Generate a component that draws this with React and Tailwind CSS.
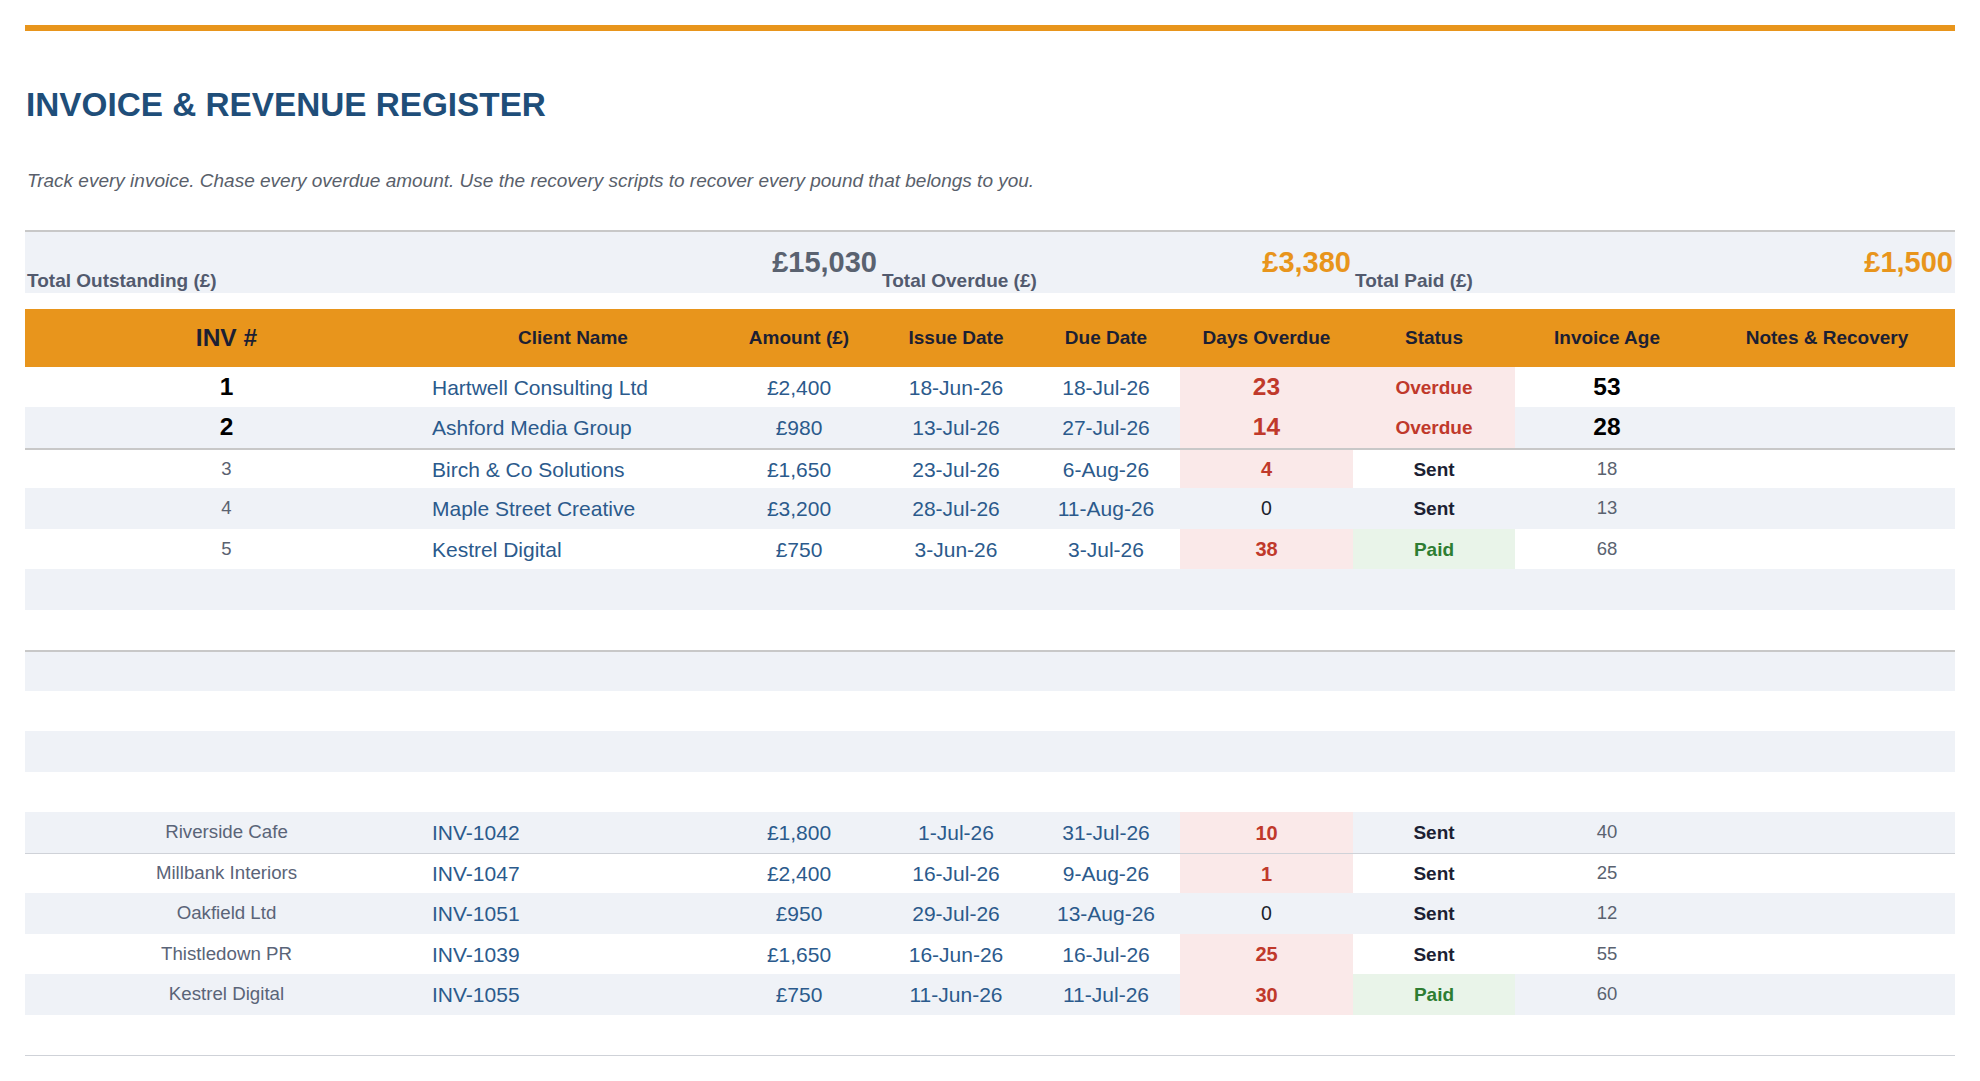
import React from "react";

const cols =
  "grid grid-cols-[403px_290px_162px_152px_148px_173px_162px_184px_256px]";

const rows = [
  { kind: "big", a: "1", b: "Hartwell Consulting Ltd", amt: "£2,400", issue: "18-Jun-26", due: "18-Jul-26", days: 23, status: "Overdue", age: "53" },
  { kind: "big", a: "2", b: "Ashford Media Group", amt: "£980", issue: "13-Jul-26", due: "27-Jul-26", days: 14, status: "Overdue", age: "28" },
  { kind: "small", line: "thick", a: "3", b: "Birch & Co Solutions", amt: "£1,650", issue: "23-Jul-26", due: "6-Aug-26", days: 4, status: "Sent", age: "18" },
  { kind: "small", a: "4", b: "Maple Street Creative", amt: "£3,200", issue: "28-Jul-26", due: "11-Aug-26", days: 0, status: "Sent", age: "13" },
  { kind: "small", a: "5", b: "Kestrel Digital", amt: "£750", issue: "3-Jun-26", due: "3-Jul-26", days: 38, status: "Paid", age: "68" },
  { kind: "empty" },
  { kind: "empty" },
  { kind: "empty", line: "thick" },
  { kind: "empty" },
  { kind: "empty" },
  { kind: "empty" },
  { kind: "alt", a: "Riverside Cafe", b: "INV-1042", amt: "£1,800", issue: "1-Jul-26", due: "31-Jul-26", days: 10, status: "Sent", age: "40" },
  { kind: "alt", line: "thin", a: "Millbank Interiors", b: "INV-1047", amt: "£2,400", issue: "16-Jul-26", due: "9-Aug-26", days: 1, status: "Sent", age: "25" },
  { kind: "alt", a: "Oakfield Ltd", b: "INV-1051", amt: "£950", issue: "29-Jul-26", due: "13-Aug-26", days: 0, status: "Sent", age: "12" },
  { kind: "alt", a: "Thistledown PR", b: "INV-1039", amt: "£1,650", issue: "16-Jun-26", due: "16-Jul-26", days: 25, status: "Sent", age: "55" },
  { kind: "alt", a: "Kestrel Digital", b: "INV-1055", amt: "£750", issue: "11-Jun-26", due: "11-Jul-26", days: 30, status: "Paid", age: "60" },
  { kind: "empty" },
];

function Cell({ className = "", children }) {
  return (
    <div className={"flex items-center justify-center h-full leading-none " + className}>
      {children}
    </div>
  );
}

function Row({ r, i }) {
  const bg = i % 2 === 1 ? "bg-[#eff2f7]" : "bg-white";
  const line =
    r.line === "thick"
      ? "border-t-2 border-[#c8c8c8]"
      : r.line === "thin"
      ? "border-t border-[#cfd2d8]"
      : "";

  if (r.kind === "empty") {
    return <div className={`h-[40.5px] ${bg} ${line}`} />;
  }

  const big = r.kind === "big";
  const daysBg = r.days > 0 ? "bg-[#fae9e9]" : "";
  const daysText =
    r.days > 0
      ? big
        ? "text-[24.5px] font-bold text-[#c0392b]"
        : "text-[20px] font-bold text-[#c0392b]"
      : "text-[19.5px] text-[#1c1f2e]";

  let statusCls = "text-[19px] font-bold text-[#1c1f33]";
  let statusBg = "";
  if (r.status === "Overdue") {
    statusCls = "text-[19px] font-bold text-[#c0392b]";
    statusBg = "bg-[#fae9e9]";
  } else if (r.status === "Paid") {
    statusCls = "text-[19px] font-bold text-[#2e7d32]";
    statusBg = "bg-[#e9f4e9]";
  }

  return (
    <div className={`${cols} h-[40.5px] ${bg} ${line}`}>
      {big ? (
        <Cell className="text-[24.5px] font-bold text-black">{r.a}</Cell>
      ) : r.kind === "alt" ? (
        <Cell className="text-[18.7px] text-[#5a6478]">{r.a}</Cell>
      ) : (
        <Cell className="text-[18.5px] text-[#5a6270]">{r.a}</Cell>
      )}
      <Cell className="justify-start pl-1 text-[21px] text-[#2b5a8c]">{r.b}</Cell>
      <Cell className="text-[21px] text-[#2b5a8c]">{r.amt}</Cell>
      <Cell className="text-[21px] text-[#2b5a8c]">{r.issue}</Cell>
      <Cell className="text-[21px] text-[#2b5a8c]">{r.due}</Cell>
      <Cell className={`${daysBg} ${daysText}`}>{r.days}</Cell>
      <Cell className={`${statusBg} ${statusCls}`}>{r.status}</Cell>
      {big ? (
        <Cell className="text-[24.5px] font-bold text-black">{r.age}</Cell>
      ) : (
        <Cell className="text-[18.5px] text-[#5a6270]">{r.age}</Cell>
      )}
      <Cell />
    </div>
  );
}

function Summary({ label, value, valueCls, w }) {
  return (
    <div className={`flex justify-between h-full ${w}`}>
      <span className="self-end pb-[3px] pl-[2px] text-[19px] font-bold leading-none text-[#525a6e]">
        {label}
      </span>
      <span className={`self-center pr-[2px] text-[29px] font-bold leading-none ${valueCls}`}>
        {value}
      </span>
    </div>
  );
}

export default function App() {
  return (
    <div className="min-h-[1081px] bg-white px-[25px] pt-[25px] font-['Liberation_Sans',Arial,sans-serif]">
      <div className="h-[6px] bg-[#e8951c]" />

      <h1 className="mt-[57px] pl-[1px] text-[33.3px] font-bold leading-none text-[#1f4e79]">
        INVOICE &amp; REVENUE REGISTER
      </h1>
      <p className="mt-[50px] pl-[2px] text-[19px] italic leading-none text-[#595f6b]">
        Track every invoice. Chase every overdue amount. Use the recovery scripts to recover every pound that belongs to you.
      </p>

      <div className="mt-[39.5px] flex h-[63px] border-t-2 border-[#c8c8c8] bg-[#eff2f7]">
        <Summary w="w-[855px]" label="Total Outstanding (£)" value="£15,030" valueCls="pr-[3px] text-[#5a6270]" />
        <Summary w="w-[473px]" label="Total Overdue (£)" value="£3,380" valueCls="text-[#e8951c]" />
        <Summary w="w-[602px]" label="Total Paid (£)" value="£1,500" valueCls="text-[#e8951c]" />
      </div>

      <div className={`${cols} mt-[16px] h-[58px] bg-[#e8951c] font-bold text-[#1c1f33]`}>
        <Cell className="text-[24.5px]">INV #</Cell>
        <Cell className="text-[19px]">Client Name</Cell>
        <Cell className="text-[19px]">Amount (£)</Cell>
        <Cell className="text-[19px]">Issue Date</Cell>
        <Cell className="text-[19px]">Due Date</Cell>
        <Cell className="text-[19px]">Days Overdue</Cell>
        <Cell className="text-[19px]">Status</Cell>
        <Cell className="text-[19px]">Invoice Age</Cell>
        <Cell className="text-[19px]">Notes &amp; Recovery</Cell>
      </div>

      <div className="border-b border-[#cfd2d8]">
        {rows.map((r, i) => (
          <Row key={i} r={r} i={i} />
        ))}
      </div>
    </div>
  );
}
